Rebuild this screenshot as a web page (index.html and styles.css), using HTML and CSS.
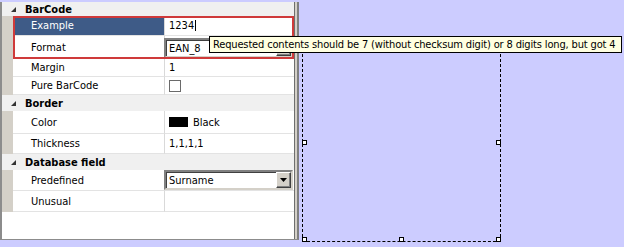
FILE: index.html
```html
<!DOCTYPE html>
<html>
<head>
<meta charset="utf-8">
<link rel="stylesheet" href="styles.css">
</head>
<body>
<div class="panel">
  <div class="grid">
    <div class="cat h14"><svg class="tri" width="5" height="5" viewBox="0 0 5 5"><polygon points="5,0 5,5 0,5" fill="#333"/></svg>BarCode</div>
    <div class="group">
      <div class="row h20"><div class="gutter"></div><div class="name sel">Example</div><div class="value edit">1234<span class="caret"></span></div></div>
      <div class="row h23"><div class="gutter"></div><div class="name">Format</div><div class="value combo-cell top2"><div class="combo"><span class="combo-text">EAN_8</span><span class="btn"><svg width="7" height="4" viewBox="0 0 7 4"><polygon points="0,0 7,0 3.5,4" fill="#000"/></svg></span></div></div></div>
    </div>
    <div class="row h18"><div class="gutter"></div><div class="name">Margin</div><div class="value">1</div></div>
    <div class="row h18"><div class="gutter"></div><div class="name">Pure BarCode</div><div class="value"><span class="check"></span></div></div>
    <div class="cat h16"><svg class="tri" width="5" height="5" viewBox="0 0 5 5"><polygon points="5,0 5,5 0,5" fill="#333"/></svg>Border</div>
    <div class="row h23"><div class="gutter"></div><div class="name">Color</div><div class="value"><span class="swatch"></span>Black</div></div>
    <div class="row h20"><div class="gutter"></div><div class="name">Thickness</div><div class="value">1,1,1,1</div></div>
    <div class="cat h16"><svg class="tri" width="5" height="5" viewBox="0 0 5 5"><polygon points="5,0 5,5 0,5" fill="#333"/></svg>Database field</div>
    <div class="row h21"><div class="gutter"></div><div class="name">Predefined</div><div class="value combo-cell"><div class="combo"><span class="combo-text">Surname</span><span class="btn"><svg width="7" height="4" viewBox="0 0 7 4"><polygon points="0,0 7,0 3.5,4" fill="#000"/></svg></span></div></div></div>
    <div class="row h21"><div class="gutter"></div><div class="name">Unusual</div><div class="value"></div></div>
    <div class="empty"></div>
  </div>
</div>
<div class="canvas">
  <div class="selection">
    <span class="handle tl"></span><span class="handle tm"></span><span class="handle tr"></span>
    <span class="handle ml"></span><span class="handle mr"></span>
    <span class="handle bl"></span><span class="handle bm"></span><span class="handle br"></span>
  </div>
</div>
<div class="tooltip">Requested contents should be 7 (without checksum digit) or 8 digits long, but got 4</div>
</body>
</html>
```
FILE: styles.css
```css
* { box-sizing: border-box; }
html, body { height: 247px; overflow: hidden; }
body {
  margin: 0;
  padding-top: 2px;
  background: #ccccff;
  font-family: "DejaVu Sans Condensed", "Liberation Sans", sans-serif;
  font-size: 11px;
  color: #000;
  display: flex;
  align-items: flex-start;
  position: relative;
}
.panel {
  width: 299px;
  height: 238px;
  flex: none;
  border-left: 2px solid #8c8c8c;
  border-bottom: 1px solid #8c8c8c;
  border-right: 2px solid #808080;
  padding-right: 2px;
  background: #d4d0c8;
  display: flex;
}
.grid {
  flex: 1;
  display: flex;
  flex-direction: column;
  background: #fff;
  border-right: 1px solid #6e6e6e;
}
.h14 { height: 14px; }
.h16 { height: 16px; }
.h18 { height: 18px; }
.h20 { height: 20px; }
.h21 { height: 21px; }
.h23 { height: 23px; }
.cat {
  flex: none;
  display: flex;
  align-items: center;
  background: #f0f0f0;
  font-weight: bold;
}
.tri { margin-left: 9px; margin-right: 9px; }
.group { position: relative; }
.group::after {
  content: "";
  position: absolute;
  left: 11px; right: 0; top: 0; bottom: 0;
  border: 2px solid #cf3a3a;
  pointer-events: none;
}
.row { display: flex; flex: none; }
.gutter { width: 11px; flex: none; background: #d4d0c8; }
.name {
  width: 152px;
  flex: none;
  display: flex;
  align-items: center;
  padding-left: 18px;
  border-right: 1px solid #d9d9d9;
  border-bottom: 1px solid #e3e3e3;
}
.name.sel { background: #3e5b87; color: #fff; }
.value {
  flex: 1;
  display: flex;
  align-items: center;
  padding-left: 4px;
  border-bottom: 1px solid #e3e3e3;
}
.caret { width: 1px; height: 11px; background: #000; margin-left: 1px; }
.combo-cell { padding-left: 0; align-items: flex-start; }
.top2 { padding-top: 2px; }
.combo {
  margin-left: -1px;
  width: 129px;
  height: 20px;
  display: flex;
  align-items: center;
  background: #fff;
  border: 2px solid;
  border-color: #808080 #d4d0c8 #d4d0c8 #808080;
  box-shadow: inset 1px 1px 0 #404040;
}
.combo-text { flex: 1; padding-left: 3px; }
.btn {
  width: 15px;
  height: 16px;
  display: flex;
  align-items: center;
  justify-content: center;
  background: #d4d0c8;
  border: 1px solid;
  border-color: #fff #404040 #404040 #fff;
  box-shadow: inset -1px -1px 0 #808080;
}
.check {
  width: 12px;
  height: 12px;
  border: 1px solid #6a6a6a;
  background: #fff;
}
.swatch {
  width: 19px;
  height: 10px;
  background: #000;
  margin-right: 5px;
}
.empty { flex: 1; background: #fff; }
.canvas { flex: 1; height: 245px; position: relative; }
.selection {
  position: absolute;
  left: 3px;
  top: 42px;
  width: 199px;
  height: 198px;
  border: 1px dashed #000;
}
.handle {
  position: absolute;
  width: 5px;
  height: 5px;
  border: 1px solid #000;
  background: #fff;
}
.tl { left: -1px; top: -1px; }
.tm { left: calc(50% - 3px); top: -1px; }
.tr { right: -1px; top: -1px; }
.ml { left: -1px; top: calc(50% - 3px); }
.mr { right: -1px; top: calc(50% - 3px); }
.bl { left: -1px; bottom: -1px; }
.bm { left: calc(50% - 3px); bottom: -1px; }
.br { right: -1px; bottom: -1px; }
.tooltip {
  position: absolute;
  left: 209px;
  top: 36px;
  width: 413px;
  height: 17px;
  background: #ffffe1;
  border: 1px solid #000;
  padding-left: 3px;
  line-height: 15px;
  letter-spacing: -0.15px;
  white-space: nowrap;
  overflow: hidden;
}
```
